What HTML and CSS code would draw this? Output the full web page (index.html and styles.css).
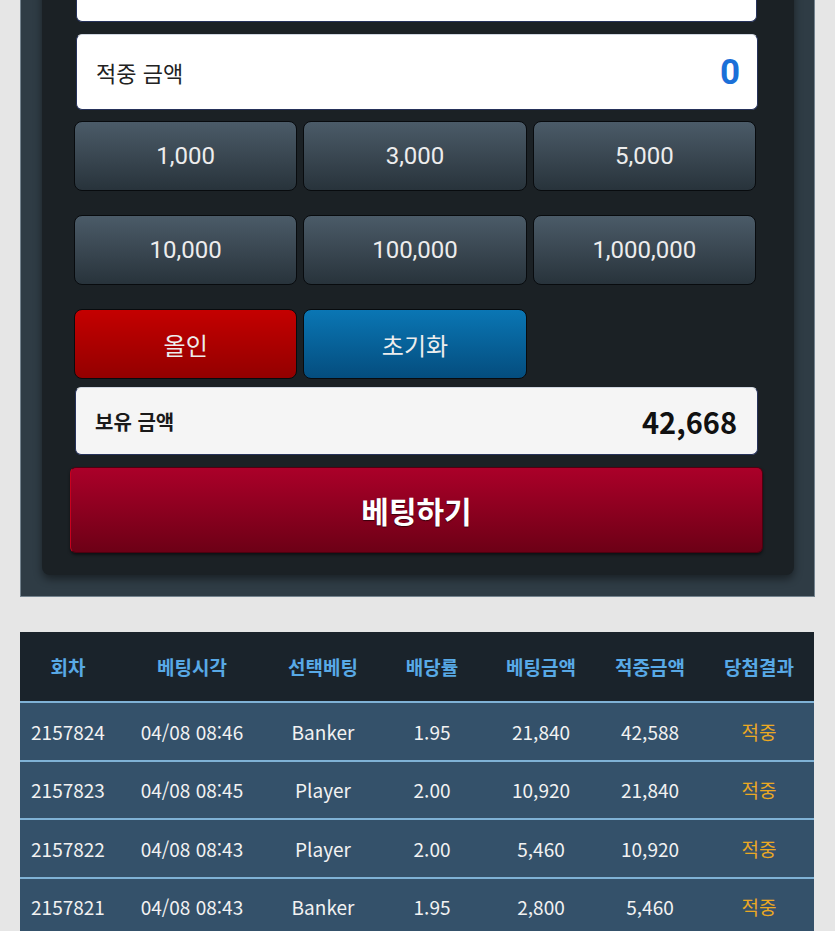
FILE: index.html
```html
<!DOCTYPE html>
<html lang="ko">
<head>
    <meta charset="UTF-8">
    <meta name="viewport" content="width=device-width, initial-scale=1.0">
    <title>베팅</title>
    <link rel="stylesheet" href="styles.css">
</head>
<body>
    <div class="panel">
        <div class="bet-box">
            <div class="field field-top"></div>
            <div class="field field-win">
                <span class="field-label">적중 금액</span>
                <span class="win-value">0</span>
            </div>

            <div class="chips">
                <button class="chip">1,000</button>
                <button class="chip">3,000</button>
                <button class="chip">5,000</button>
            </div>
            <div class="chips">
                <button class="chip">10,000</button>
                <button class="chip">100,000</button>
                <button class="chip">1,000,000</button>
            </div>
            <div class="chips chips-last">
                <button class="chip chip-allin">올인</button>
                <button class="chip chip-reset">초기화</button>
            </div>

            <div class="field field-hold">
                <span class="hold-label">보유 금액</span>
                <span class="hold-value">42,668</span>
            </div>

            <button class="bet-button">베팅하기</button>
        </div>
    </div>

    <table class="history">
        <thead>
            <tr>
                <th>회차</th>
                <th>베팅시각</th>
                <th>선택베팅</th>
                <th>배당률</th>
                <th>베팅금액</th>
                <th>적중금액</th>
                <th>당첨결과</th>
            </tr>
        </thead>
        <tbody>
            <tr>
                <td>2157824</td>
                <td>04/08 08:46</td>
                <td>Banker</td>
                <td>1.95</td>
                <td>21,840</td>
                <td>42,588</td>
                <td class="hit">적중</td>
            </tr>
            <tr>
                <td>2157823</td>
                <td>04/08 08:45</td>
                <td>Player</td>
                <td>2.00</td>
                <td>10,920</td>
                <td>21,840</td>
                <td class="hit">적중</td>
            </tr>
            <tr>
                <td>2157822</td>
                <td>04/08 08:43</td>
                <td>Player</td>
                <td>2.00</td>
                <td>5,460</td>
                <td>10,920</td>
                <td class="hit">적중</td>
            </tr>
            <tr>
                <td>2157821</td>
                <td>04/08 08:43</td>
                <td>Banker</td>
                <td>1.95</td>
                <td>2,800</td>
                <td>5,460</td>
                <td class="hit">적중</td>
            </tr>
        </tbody>
    </table>
</body>
</html>
```

FILE: styles.css
```css
body {
    margin: 0;
    background: #e6e6e6;
    font-family: "Noto Sans CJK KR", "Noto Sans", sans-serif;
    overflow: hidden;
}

.panel {
    margin: -54px 20px 0 20px;
    background: #2f3c45;
    border: 1px solid #74838e;
    border-top: none;
    padding: 0 20px 21px 21px;
}
.bet-box {
    background: #1b2125;
    border-radius: 0 0 8px 8px;
    box-shadow: 0 4px 8px rgba(0, 0, 0, 0.45);
    padding: 0 36px 22px 32px;
}

.field {
    display: flex;
    align-items: center;
    justify-content: space-between;
    background: #fff;
    border: 1px solid #26325a;
    border-top-color: #d0d6e0;
    border-radius: 6px;
    box-sizing: border-box;
}
.field-top {
    height: 76px;
    margin: 0 1px 0 2px;
}
.field-win {
    height: 76px;
    margin: 12px 0 11px 2px;
    padding: 0 17px 0 19px;
}
.field-label {
    font-size: 22px;
    color: #222;
}
.win-value {
    font-family: Roboto, sans-serif;
    font-weight: bold;
    font-size: 35px;
    color: #1b70d8;
}

.chips {
    display: grid;
    grid-template-columns: repeat(3, 1fr);
    gap: 6px;
    margin-bottom: 24px;
    margin-right: 2px;
}
.chips-last {
    margin-bottom: 8px;
}
.chip {
    height: 70px;
    border: 1.5px solid #080b0e;
    border-radius: 8px;
    background: linear-gradient(#4b5b68, #28333b);
    color: #ededed;
    font-family: Roboto, "Noto Sans CJK KR", sans-serif;
    font-size: 24px;
    cursor: pointer;
}
.chip-allin {
    background: linear-gradient(#c40000, #930000);
}
.chip-reset {
    background: linear-gradient(#0a76b4, #044d7e);
}

.field-hold {
    height: 68px;
    margin: 0 0 12px 1px;
    padding: 0 20px 0 19px;
    background: #f5f5f5;
}
.hold-label {
    font-size: 20px;
    font-weight: bold;
    color: #1a1a1a;
}
.hold-value {
    font-size: 29px;
    font-weight: bold;
    color: #111;
}

.bet-button {
    display: block;
    width: calc(100% + 9px);
    height: 86px;
    margin: 0 -5px 0 -4px;
    border: 1px solid #4e0010;
    border-left-color: #c8001e;
    border-radius: 6px;
    background: linear-gradient(#ab0029, #6d0016);
    box-shadow: 0 2px 3px rgba(0, 0, 0, 0.5);
    color: #fff;
    font-family: "Noto Sans CJK KR", sans-serif;
    font-size: 30px;
    font-weight: bold;
    text-shadow: 0 1px 1px rgba(0, 0, 0, 0.6);
    cursor: pointer;
}

.history {
    width: 794px;
    margin: 35px 0 0 20px;
    border-collapse: collapse;
    table-layout: fixed;
}
.history th {
    height: 69px;
    padding: 0;
    background: #1a232b;
    color: #58a9e6;
    font-size: 19px;
    font-weight: bold;
    border-bottom: 2px solid #7fb2d6;
}
.history th:nth-child(1) { width: 96px; }
.history th:nth-child(2) { width: 152px; }
.history th:nth-child(3) { width: 110px; }
.history th:nth-child(4) { width: 108px; }
.history th:nth-child(5) { width: 110px; }
.history th:nth-child(6) { width: 108px; }
.history th:nth-child(7) { width: 110px; }
.history td {
    height: 56.5px;
    padding: 0;
    background: #34516a;
    color: #f2f2f2;
    font-size: 19px;
    text-align: center;
    border-bottom: 2px solid #7fb2d6;
}
.history td.hit {
    color: #eaa823;
}
```
